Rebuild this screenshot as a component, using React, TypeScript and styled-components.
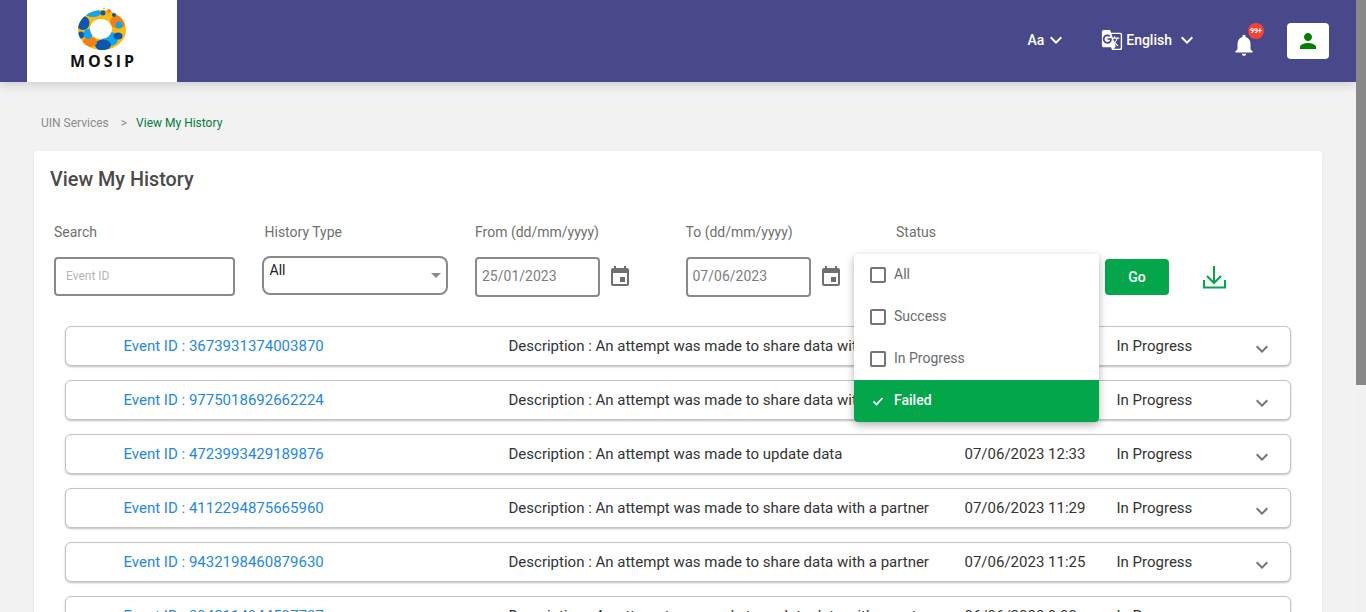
import styled, { createGlobalStyle } from 'styled-components';
import { MdEvent, MdGTranslate, MdKeyboardArrowDown, MdNotifications, MdPerson } from 'react-icons/md';

const GlobalStyle = createGlobalStyle`
  html, body {
    margin: 0;
    padding: 0;
    height: 100%;
    overflow: hidden;
    background: #f2f2f2;
    font-family: Roboto, "Liberation Sans", sans-serif;
  }
  * { box-sizing: border-box; }
`;

const historyRows = [
  { id: '3673931374003870', desc: 'An attempt was made to share data with a partner', date: '07/06/2023 12:41' },
  { id: '9775018692662224', desc: 'An attempt was made to share data with a partner', date: '07/06/2023 12:36' },
  { id: '4723993429189876', desc: 'An attempt was made to update data', date: '07/06/2023 12:33' },
  { id: '4112294875665960', desc: 'An attempt was made to share data with a partner', date: '07/06/2023 11:29' },
  { id: '9432198460879630', desc: 'An attempt was made to share data with a partner', date: '07/06/2023 11:25' },
  { id: '3942114944597737', desc: 'An attempt was made to update data with a partner', date: '06/06/2023 9:00' },
  { id: '7120443698125530', desc: 'An attempt was made to share data with a partner', date: '06/06/2023 8:52' },
];

const statusOptions = [
  { label: 'All', selected: false },
  { label: 'Success', selected: false },
  { label: 'In Progress', selected: false },
  { label: 'Failed', selected: true },
];

const MosipLogo = () => (
  <svg width="62" height="47" viewBox="0 0 62 47">
    <defs>
      <clipPath id="ring">
        <path fillRule="evenodd" clipRule="evenodd" d="M31 3C44 3 55 12 55 23C55 34 44 43 31 43C18 43 7 34 7 23C7 12 18 3 31 3ZM30 12C24 12 19 16 19 22C19 28 24 32 30 32C36 32 41 28 41 22C41 16 36 12 30 12Z" />
      </clipPath>
    </defs>
    <g clipPath="url(#ring)">
      <rect x="0" y="0" width="62" height="47" fill="#fdb913" />
      <ellipse cx="12" cy="16" rx="6.5" ry="7" fill="#0b57b0" />
      <ellipse cx="22" cy="6" rx="8" ry="4" fill="#0ea5f0" />
      <ellipse cx="47" cy="15" rx="8" ry="6.5" fill="#f57f17" />
      <circle cx="48" cy="18" r="3.5" fill="#0ea5f0" />
      <ellipse cx="39" cy="32" rx="8" ry="7" fill="#0ea5f0" />
      <ellipse cx="47" cy="29" rx="4.5" ry="3.5" fill="#0b57b0" />
      <ellipse cx="32" cy="38" rx="8" ry="5.5" fill="#0b57b0" />
      <ellipse cx="19" cy="35" rx="7" ry="5" fill="#f57f17" />
      <ellipse cx="17" cy="27" rx="4.5" ry="5" fill="#0ea5f0" />
      <ellipse cx="10" cy="28" rx="3" ry="3.5" fill="#0b57b0" />
    </g>
    <circle cx="32" cy="6" r="2.5" fill="#0b57b0" />
    <circle cx="38" cy="4" r="2" fill="#f57f17" />
    <circle cx="43" cy="8" r="2" fill="#0b57b0" />
    <circle cx="37" cy="9" r="2" fill="#fdb913" />
    <circle cx="33" cy="1.5" r="1" fill="#fdb913" />
  </svg>
);

const DownloadIcon = () => (
  <svg width="24" height="24" viewBox="0 0 24 24" fill="none" stroke="#03a64a" strokeWidth="2">
    <path d="M12 1V18" />
    <path d="M5 11L12 18L19 11" />
    <path d="M2 15V22.5H23V15" />
  </svg>
);

const App = () => (
  <>
    <GlobalStyle />
    <Frame>
      <Page>
        <Header>
          <LogoBox>
            <MosipLogo />
            <LogoText>MOSIP</LogoText>
          </LogoBox>
          <HeaderTools>
            <FontTool>
              Aa
              <MdKeyboardArrowDown size={24} />
            </FontTool>
            <LanguageTool>
              <MdGTranslate size={22} />
              <LanguageName>English</LanguageName>
              <MdKeyboardArrowDown size={24} />
            </LanguageTool>
            <BellWrap>
              <MdNotifications size={26} />
              <Badge>99+</Badge>
            </BellWrap>
            <ProfileButton>
              <MdPerson size={24} />
            </ProfileButton>
          </HeaderTools>
        </Header>

        <Main>
          <Breadcrumb>
            <span>UIN Services</span>
            <Sep>&gt;</Sep>
            <Current>View My History</Current>
          </Breadcrumb>

          <Card>
            <Title>View My History</Title>
            <Filters>
              <Field>
                <FieldLabel>Search</FieldLabel>
                <SearchBox>Event ID</SearchBox>
              </Field>
              <Field>
                <FieldLabel>History Type</FieldLabel>
                <SelectBox>
                  All
                  <Caret />
                </SelectBox>
              </Field>
              <Field>
                <FieldLabel>From (dd/mm/yyyy)</FieldLabel>
                <DateRow>
                  <DateBox>25/01/2023</DateBox>
                  <MdEvent size={24} />
                </DateRow>
              </Field>
              <Field>
                <FieldLabel>To (dd/mm/yyyy)</FieldLabel>
                <DateRow>
                  <DateBox>07/06/2023</DateBox>
                  <MdEvent size={24} />
                </DateRow>
              </Field>
              <Field>
                <FieldLabel>Status</FieldLabel>
              </Field>
              <Actions>
                <GoButton>Go</GoButton>
                <DownloadIcon />
              </Actions>
              <StatusMenu>
                {statusOptions.map((option) => (
                  <StatusOption key={option.label} $selected={option.selected}>
                    <CheckSlot $selected={option.selected}>
                      {option.selected && (
                        <svg width="12" height="12" viewBox="0 0 12 12" fill="none" stroke="#fff" strokeWidth="1.8">
                          <path d="M1.5 6.5L4.5 9.5L10.5 3" />
                        </svg>
                      )}
                    </CheckSlot>
                    <OptionLabel>{option.label}</OptionLabel>
                  </StatusOption>
                ))}
              </StatusMenu>
            </Filters>

            <Rows>
              {historyRows.map((row) => (
                <Row key={row.id}>
                  <EventId>Event ID : {row.id}</EventId>
                  <RowText>Description : {row.desc}</RowText>
                  <RowText>{row.date}</RowText>
                  <RowText>In Progress</RowText>
                  <RowChevron>
                    <MdKeyboardArrowDown size={24} />
                  </RowChevron>
                </Row>
              ))}
            </Rows>
          </Card>
        </Main>
      </Page>
      <ScrollTrack>
        <ScrollThumb />
      </ScrollTrack>
    </Frame>
  </>
);

const Frame = styled.div`
  display: flex;
  height: 100vh;
`;

const Page = styled.div`
  flex: 1;
  min-width: 0;
  overflow: hidden;
`;

const ScrollTrack = styled.div`
  flex: none;
  width: 10px;
  background: #f1f1f1;
`;

const ScrollThumb = styled.div`
  height: 385px;
  background: #888;
`;

const Header = styled.header`
  display: flex;
  justify-content: space-between;
  height: 82px;
  padding: 0 27px;
  background: #48498a;
  box-shadow: 0 3px 10px rgba(0, 0, 0, 0.15);
`;

const LogoBox = styled.div`
  display: flex;
  flex-direction: column;
  align-items: center;
  width: 150px;
  height: 82px;
  padding-top: 7px;
  background: #fff;
`;

const LogoText = styled.div`
  margin-right: -3px;
  font-family: "Open Sans", sans-serif;
  font-size: 16px;
  line-height: 14px;
  font-weight: 700;
  letter-spacing: 3px;
  color: #111;
`;

const HeaderTools = styled.div`
  display: flex;
  align-items: center;
  padding-bottom: 3px;
  color: #fff;
  font-size: 14px;
  font-weight: 500;
`;

const FontTool = styled.div`
  display: flex;
  align-items: center;
  margin-right: 33px;
`;

const LanguageTool = styled.div`
  display: flex;
  align-items: center;
  margin-right: 32px;
`;

const LanguageName = styled.span`
  margin: 0 3px;
`;

const BellWrap = styled.div`
  position: relative;
  display: flex;
  margin: 11px 30px 0 0;
`;

const Badge = styled.span`
  position: absolute;
  top: -9px;
  right: -7px;
  width: 16px;
  height: 16px;
  border-radius: 50%;
  background: #f44336;
  color: #fff;
  font-size: 7px;
  line-height: 16px;
  font-weight: 700;
  text-align: center;
`;

const ProfileButton = styled.div`
  display: flex;
  align-items: center;
  justify-content: center;
  width: 42px;
  height: 36px;
  margin-top: 2px;
  border-radius: 4px;
  background: #fff;
  color: #008000;
`;

const Main = styled.main`
  padding: 33px 34px 32px;
`;

const Breadcrumb = styled.div`
  display: flex;
  height: 16px;
  margin: 0 0 20px 7px;
  font-size: 12px;
  line-height: 16px;
  color: #8a8a8a;
`;

const Sep = styled.span`
  margin: 0 9px 0 12px;
`;

const Current = styled.span`
  color: #007d3a;
`;

const Card = styled.section`
  height: 790px;
  padding: 17px 16px 0;
  border-radius: 4px;
  background: #fff;
  box-shadow: 0 1px 3px rgba(0, 0, 0, 0.08);
`;

const Title = styled.h1`
  margin: 0;
  font-size: 19.8px;
  line-height: 24px;
  font-weight: 500;
  color: #4a4a4a;
`;

const Filters = styled.div`
  position: relative;
  display: grid;
  grid-template-columns: repeat(5, 210.5px) auto;
  height: 102px;
  margin: 32px 0 0 4px;
`;

const Field = styled.div`
  display: flex;
  flex-direction: column;
`;

const FieldLabel = styled.label`
  height: 16px;
  margin-bottom: 17px;
  font-size: 14px;
  line-height: 16px;
  color: #6f6f6f;
`;

const SearchBox = styled.div`
  width: 181px;
  height: 39px;
  padding-left: 10px;
  border: 2px solid #8a8a8a;
  border-radius: 4px;
  font-size: 12px;
  line-height: 35px;
  color: #b5b5b5;
`;

const SelectBox = styled.div`
  position: relative;
  width: 186px;
  height: 39px;
  margin: -1px 0 0 -3px;
  padding: 2px 0 0 6px;
  border: 2px solid #8a8a8a;
  border-radius: 8px;
  font-size: 14px;
  line-height: 20px;
  color: #222;
`;

const Caret = styled.span`
  position: absolute;
  top: 15px;
  right: 5px;
  border-left: 5px solid transparent;
  border-right: 5px solid transparent;
  border-top: 5px solid #8a8a8a;
`;

const DateRow = styled.div`
  display: flex;
  align-items: center;
  gap: 8px;
  color: #6f6f6f;
`;

const DateBox = styled.div`
  width: 125px;
  height: 40px;
  padding-left: 5px;
  border: 2px solid #8a8a8a;
  border-radius: 4px;
  font-size: 14px;
  line-height: 35px;
  color: #7d7d7d;
`;

const Actions = styled.div`
  display: flex;
  align-items: center;
  gap: 33px;
  height: 36px;
  margin: 35px 0 0 -1.5px;
`;

const GoButton = styled.button`
  width: 64px;
  height: 36px;
  border: 0;
  border-radius: 4px;
  background: #03a64a;
  color: #fff;
  font-family: inherit;
  font-size: 14px;
  font-weight: 500;
`;

const StatusMenu = styled.div`
  position: absolute;
  top: 30px;
  left: 800px;
  z-index: 2;
  width: 245px;
  overflow: hidden;
  border-radius: 4px;
  background: #fff;
  box-shadow: 0 3px 8px rgba(0, 0, 0, 0.3);
`;

const StatusOption = styled.div<{ $selected: boolean }>`
  display: flex;
  align-items: center;
  height: 42px;
  padding-left: 16px;
  background: ${({ $selected }) => ($selected ? '#03a64a' : '#fff')};
  color: ${({ $selected }) => ($selected ? '#fff' : '#6b6b6b')};
  font-size: 14px;
  font-weight: ${({ $selected }) => ($selected ? 500 : 400)};
`;

const OptionLabel = styled.span`
  margin-top: -2px;
`;

const CheckSlot = styled.span<{ $selected: boolean }>`
  display: flex;
  align-items: center;
  justify-content: center;
  width: 16px;
  height: 16px;
  margin-right: 8px;
  border: ${({ $selected }) => ($selected ? '0' : '2px solid #757575')};
  border-radius: 2px;
`;

const Rows = styled.div`
  display: flex;
  flex-direction: column;
  gap: 14px;
  margin: 0 15px;
`;

const Row = styled.article`
  display: grid;
  grid-template-columns: 385px 456px 152px 133px auto;
  align-items: center;
  height: 40px;
  padding-left: 57.5px;
  border: 1px solid #c4c4c4;
  border-radius: 6px;
  background: #fff;
  box-shadow: 0 1px 2px rgba(0, 0, 0, 0.25);
`;

const RowText = styled.span`
  font-size: 15px;
  color: #333;
  white-space: nowrap;
  overflow: hidden;
`;

const EventId = styled(RowText)`
  color: #1e88e5;
`;

const RowChevron = styled.span`
  display: flex;
  padding-top: 5px;
  color: #757575;
`;

export default App;
